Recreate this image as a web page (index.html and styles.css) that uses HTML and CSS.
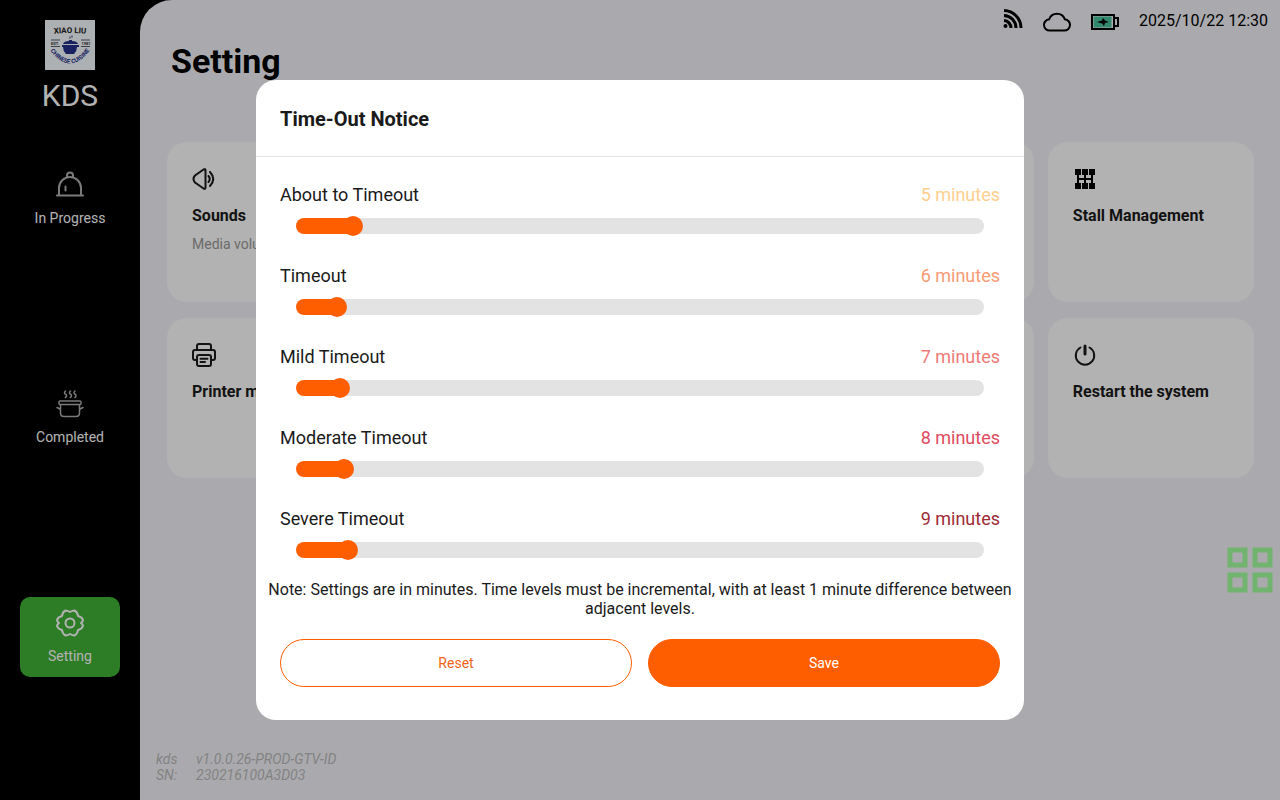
FILE: index.html
```html
<!DOCTYPE html>
<html lang="en">
<head>
    <meta charset="UTF-8" />
    <meta name="viewport" content="width=device-width, initial-scale=1" />
    <title>KDS - Setting</title>
    <link rel="stylesheet" href="styles.css">
</head>
<body>
    <div class="app">
        <aside class="sidebar">
            <svg class="logo" viewBox="0 0 50 50" role="img" aria-label="Xiao Liu Chinese Cuisine">
                <rect width="50" height="50" fill="#f8fcff"/>
                <path id="arc-top" d="M3 14.500Q25 11.500 47 14.500" fill="none"/>
                <path id="arc-bottom" d="M4 29Q25 58 46 29" fill="none"/>
                <text class="logo-name"><textPath href="#arc-top" startOffset="50%">XIAO LIU</textPath></text>
                <text class="logo-tag"><textPath href="#arc-bottom" startOffset="50%">CHINESE CUISINE</textPath></text>
                <text class="logo-year" x="10" y="25">EST.</text>
                <text class="logo-year" x="41" y="25">1981</text>
                <path d="M6 20h9M6 26.500h9M36 20h9M36 26.500h9" stroke="#555b70"/>
                <path d="M25 16.500v2M27 15.500v2" stroke="#333a66"/>
                <path d="M18 24Q19 21 24 21V20h3v1q5 0 6 3z" fill="#24308c"/>
                <path d="M17 25h17v2h-2q0 4-3 7h-8q-3-3-3-7h-1z" fill="#24308c"/>
            </svg>
            <div class="brand">KDS</div>
            <nav class="menu">
                <a class="menu-item" href="#progress">
                    <svg class="dim" viewBox="0 0 28 28" width="28" height="28">
                        <path d="M3 23.500V17a11 11 0 0 1 22 0v6.500M11 6.500V4.500a3 3 0 0 1 6 0v2M1 24.500h26M9.500 15.500v4"/>
                    </svg>
                    In Progress
                </a>
                <a class="menu-item" href="#completed">
                    <svg class="dim thin" viewBox="0 0 28 28" width="28" height="28">
                        <rect x="3" y="11" width="22" height="3.500" rx="1"/>
                        <path d="M4.500 15v8q0 3.500 3.500 3.500h12q3.500 0 3.500-3.500V15M4 19l-3-1.500M24 19l3-1.500"/>
                        <path d="M9.500 1q-2 1.700 0 3.200t0 3.200M14.500 1q-2 1.700 0 3.200t0 3.200M19 1q-2 1.700 0 3.200t0 3.200"/>
                    </svg>
                    Completed
                </a>
                <a class="menu-item active" href="#setting">
                    <svg viewBox="0 0 28 28" width="28" height="28">
                        <path d="M9.500 1.500q2 0 4.500 1.500 2.500-1.500 4.500-1.500 3 1.500 3.500 5.500 4 1 5 4 0 1.500-2 3 2 1.500 2 3-1 3-5 4-.5 4-3.500 5.500-2 0-4.500-1.500-2.500 1.500-4.500 1.500-3-1.500-3.500-5.500-4-1-5-4 0-1.500 2-3-2-1.500-2-3 1-3 5-4 .5-4 3.500-5.500z"/>
                        <circle cx="14" cy="14" r="4.500"/>
                    </svg>
                    Setting
                </a>
            </nav>
        </aside>

        <main class="content">
            <div class="status">
                <svg class="rss" viewBox="0 0 20 20" width="20" height="20">
                    <path d="M1 1.500A17.500 17.500 0 0 1 18 19M1 6.500A12.500 12.500 0 0 1 13 19M1 11.500A7.500 7.500 0 0 1 8 19"/>
                    <circle cx="2.500" cy="17" r="2"/>
                </svg>
                <svg class="cloud" viewBox="0 0 28 20" width="28" height="20">
                    <path d="M7 18.500a5.600 5.600 0 0 1-.8-11.200 8.200 8.200 0 0 1 15.600 0A5.600 5.600 0 0 1 21 18.500z"/>
                </svg>
                <svg class="battery" viewBox="0 0 28 16" width="28" height="16">
                    <rect x="1" y="1" width="22" height="14" fill="none" stroke="#000" stroke-width="2"/>
                    <rect x="2.500" y="2.500" width="18" height="11" fill="#48c49c"/>
                    <path d="M23 4h4v8h-4" fill="none" stroke="#000" stroke-width="2"/>
                    <path d="M6 8l5-1.500 1-2.500 2 2.500 4 1.500-4 1-1 3-2-2.500z" fill="#000"/>
                </svg>
                <time>2025/10/22 12:30</time>
            </div>
            <h1>Setting</h1>
            <div class="cards">
                <section class="card">
                    <svg viewBox="0 0 24 24" width="24" height="24">
                        <path d="M13.500 3.500v17q0 2-2 1L3 15.500q-3-3.500 0-7l8.500-6q2-1 2 1zM16.500 9q2.500 3 0 6M18 5q6.500 7 0 14"/>
                    </svg>
                    <h2>Sounds</h2>
                    <p>Media volume</p>
                </section>
                <section class="card"></section>
                <section class="card"></section>
                <section class="card"></section>
                <section class="card">
                    <svg class="solid" viewBox="0 0 24 24" width="24" height="24">
                        <path d="M2 2h6v6H2zM9 2h6v6H9zM16 2h6v6h-6zM2 16h6v6H2zM9 16h6v6H9zM16 16h6v6h-6zM4 8h2v8H4zM11 8h2v8h-2zM18 8h2v8h-2zM5 11h14v2H5z"/>
                    </svg>
                    <h2>Stall Management</h2>
                </section>
                <section class="card">
                    <svg viewBox="0 0 24 24" width="24" height="24">
                        <path d="M5 6.500V3q0-2 2-2h10q2 0 2 2v3.500M5 17H3q-2 0-2-2V9q0-2 2-2h18q2 0 2 2v6q0 2-2 2h-2"/>
                        <rect x="5" y="12" width="14" height="11" rx="2"/>
                        <path d="M8.500 15.700h7M8.500 19h4.500"/>
                    </svg>
                    <h2>Printer management</h2>
                </section>
                <section class="card"></section>
                <section class="card"></section>
                <section class="card"></section>
                <section class="card">
                    <svg viewBox="0 0 24 24" width="24" height="24">
                        <path d="M7.500 4.500a9.200 9.200 0 1 0 9 0"/>
                        <path d="M12 3v8" stroke-width="3"/>
                    </svg>
                    <h2>Restart the system</h2>
                </section>
            </div>
            <dl class="version">
                <dt>kds</dt><dd>v1.0.0.26-PROD-GTV-ID</dd>
                <dt>SN:</dt><dd>230216100A3D03</dd>
            </dl>
        </main>
    </div>

    <div class="overlay">
        <form class="modal" role="dialog" aria-labelledby="modal-title">
            <header class="modal-header">
                <h2 id="modal-title">Time-Out Notice</h2>
            </header>
            <div class="levels">
                <div class="level">
                    <label for="about">About to Timeout</label>
                    <output class="minutes soon" for="about">5 minutes</output>
                    <input type="range" id="about" min="1" max="58" value="5" style="--fill: 8%">
                </div>
                <div class="level">
                    <label for="timeout">Timeout</label>
                    <output class="minutes late" for="timeout">6 minutes</output>
                    <input type="range" id="timeout" min="3" max="67" value="6" style="--fill: 6%">
                </div>
                <div class="level">
                    <label for="mild">Mild Timeout</label>
                    <output class="minutes mild" for="mild">7 minutes</output>
                    <input type="range" id="mild" min="4" max="63" value="7" style="--fill: 6%">
                </div>
                <div class="level">
                    <label for="moderate">Moderate Timeout</label>
                    <output class="minutes moderate" for="moderate">8 minutes</output>
                    <input type="range" id="moderate" min="5" max="58" value="8" style="--fill: 7%">
                </div>
                <div class="level">
                    <label for="severe">Severe Timeout</label>
                    <output class="minutes severe" for="severe">9 minutes</output>
                    <input type="range" id="severe" min="6" max="54" value="9" style="--fill: 7%">
                </div>
            </div>
            <p class="note">Note: Settings are in minutes. Time levels must be incremental, with at least 1 minute difference between adjacent levels.</p>
            <div class="actions">
                <button type="reset" class="reset">Reset</button>
                <button type="button" class="save">Save</button>
            </div>
        </form>
    </div>

    <button class="apps" aria-label="Apps">
        <svg viewBox="0 0 46 46" width="46" height="46">
            <path d="M3 3h15v15H3zM28 3h15v15H28zM3 28h15v15H3zM28 28h15v15H28z"/>
        </svg>
    </button>
</body>
</html>
```

FILE: styles.css
```css
* {
    box-sizing: border-box;
}
body {
    margin: 0;
    font-family: Roboto, sans-serif;
    color: #1a1a1a;
    background-color: #000;
}
h1, h2, p, dl, dd {
    margin: 0;
}
.app {
    display: flex;
    min-height: 100vh;
}

/* sidebar */
.sidebar {
    display: flex;
    flex-direction: column;
    align-items: center;
    width: 140px;
    padding: 20px;
    color: #fff;
}
.logo {
    width: 50px;
    height: 50px;
}
.logo text {
    font-weight: bold;
    text-anchor: middle;
}
.logo-name {
    font-size: 8px;
    fill: #222;
}
.logo-tag {
    font-size: 6px;
    fill: #24308c;
}
.logo-year {
    font-size: 4px;
    fill: #333;
}
.brand {
    font-size: 30px;
    line-height: 36px;
    margin-top: 8px;
}
.menu {
    flex: 1;
    display: flex;
    flex-direction: column;
    justify-content: space-between;
    width: 100%;
    margin: 45px 0 103px;
}
.menu-item {
    display: flex;
    flex-direction: column;
    align-items: center;
    gap: 10px;
    height: 80px;
    padding-top: 12px;
    border-radius: 10px;
    font-size: 14px;
    line-height: 18px;
    color: #fff;
    text-decoration: none;
}
.menu-item svg {
    fill: none;
    stroke: #fff;
    stroke-width: 2;
    stroke-linecap: round;
    stroke-linejoin: round;
}
.menu-item .dim {
    stroke: #b0b0b0;
}
.menu-item .thin {
    stroke-width: 1.5;
}
.menu-item.active {
    background-color: #41b237;
}

/* content */
.content {
    flex: 1;
    display: flex;
    flex-direction: column;
    min-width: 0;
    padding: 0 12px 17px 16px;
    border-top-left-radius: 32px;
    background-color: #f4f4f9;
}
.status {
    display: flex;
    justify-content: flex-end;
    align-items: center;
    gap: 20px;
    height: 40px;
    font-size: 16px;
    color: #000;
}
.status svg {
    margin-top: 4px;
}
.status .rss {
    margin-top: 0;
    margin-bottom: 2px;
}
.rss path, .cloud path {
    fill: none;
    stroke: #000;
    stroke-width: 2;
}
.rss path {
    stroke-width: 3;
}
h1 {
    margin-left: 15px;
    font-size: 34px;
    line-height: 42px;
    color: #000;
}
.cards {
    display: grid;
    grid-template-columns: repeat(5, 1fr);
    gap: 16px 14px;
    margin: 60px 14px 0 11px;
}
.card {
    height: 160px;
    padding: 25px;
    border-radius: 20px;
    background-color: #fff;
    white-space: nowrap;
}
.card svg {
    display: block;
    fill: none;
    stroke: #1a1a1a;
    stroke-width: 2;
    stroke-linecap: round;
}
.card .solid {
    fill: #000;
    stroke: none;
}
.card h2 {
    margin-top: 15px;
    font-size: 16px;
    line-height: 20px;
}
.card p {
    margin-top: 9px;
    font-size: 14px;
    line-height: 18px;
    color: #999;
}
.version {
    display: grid;
    grid-template-columns: 40px 1fr;
    margin-top: auto;
    font-size: 14px;
    line-height: 16px;
    font-style: italic;
    color: #bbb;
}

/* modal */
.overlay {
    position: fixed;
    inset: 0;
    display: flex;
    justify-content: center;
    align-items: center;
    background-color: rgba(0, 0, 0, 0.3);
}
.modal {
    display: flex;
    flex-direction: column;
    width: 60%;
    min-height: 80%;
    border-radius: 20px;
    background-color: #fff;
}
.modal-header {
    padding: 24px 24px 22px;
    border-bottom: 1px solid #e3e3e3;
}
.modal-header h2 {
    font-size: 20px;
    line-height: 30px;
}
.levels {
    display: flex;
    flex-direction: column;
    gap: 26px;
    padding: 24px 24px 20px;
}
.level {
    display: grid;
    grid-template-columns: 1fr auto;
    row-gap: 7px;
    font-size: 18px;
    line-height: 28px;
}
.level input {
    grid-column: span 2;
    appearance: none;
    height: 20px;
    margin: 0 16px;
    background: none;
}
.level input::-webkit-slider-runnable-track {
    height: 16px;
    border-radius: 8px;
    background: linear-gradient(to right, #ff5e00 var(--fill), #e3e3e3 var(--fill));
}
.level input::-webkit-slider-thumb {
    appearance: none;
    width: 20px;
    height: 20px;
    margin-top: -2px;
    border-radius: 50%;
    background-color: #ff5e00;
}
.soon {
    color: #ffcf8f;
}
.late {
    color: #f99b76;
}
.mild {
    color: #ee7a76;
}
.moderate {
    color: #e04a60;
}
.severe {
    color: #a02a35;
}
.note {
    padding: 0 4px;
    font-size: 16px;
    line-height: 19px;
    text-align: center;
}
.actions {
    display: flex;
    gap: 16px;
    padding: 21px 24px 32px;
}
.actions button {
    flex: 1;
    height: 48px;
    border: 1px solid #ff5e00;
    border-radius: 24px;
    font-family: inherit;
    font-size: 14px;
    cursor: pointer;
}
.reset {
    color: #f06418;
    background-color: #fff;
}
.save {
    color: #fff;
    background-color: #ff5e00;
}

/* floating button */
.apps {
    position: fixed;
    top: 547px;
    right: 7px;
    padding: 0;
    border: none;
    background: none;
    cursor: pointer;
}
.apps svg {
    display: block;
    fill: none;
    stroke: #72b46f;
    stroke-width: 5;
}
```
